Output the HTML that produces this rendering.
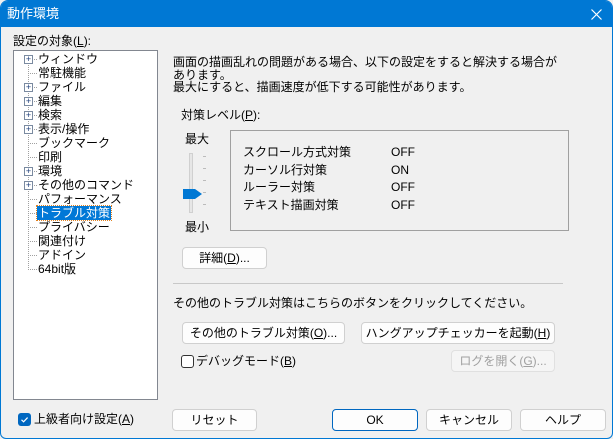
<!DOCTYPE html>
<html><head><meta charset="utf-8"><style>
*{margin:0;padding:0;box-sizing:border-box}
body{width:613px;height:439px;background:#f0f0f0;font-family:"Liberation Sans","Noto Sans CJK JP",sans-serif;font-size:12px;color:#000;position:relative;overflow:hidden}
.win{position:absolute;left:0;top:0;width:613px;height:439px;border:1px solid #0078d4;border-radius:8px 8px 6px 6px;overflow:hidden;background:#f0f0f0}
.title{position:absolute;left:0;top:0;width:613px;height:26px;background:#0078d4;color:#fff;font-size:13px;line-height:26px;padding-left:6px}
.a{position:absolute;white-space:nowrap;line-height:14px}
.tree{position:absolute;left:12px;top:49px;width:145px;height:350px;background:#fff;border:1px solid #828790}
.btn{position:absolute;background:#fdfdfd;border:1px solid #d0d0d0;border-radius:4px;text-align:center;line-height:20px;height:22px}
.plus{position:absolute;width:9px;height:9px;border:1px solid #7a8aa0;background:#fff;font-size:9px;line-height:7px;text-align:center;color:#1e3f7a}
u{text-decoration:underline}
</style></head><body><div class="win">
<div class="title">動作環境</div>
<svg style="position:absolute;left:590px;top:8px" width="11" height="11"><path d="M0.5 0.5L10.5 10.5M10.5 0.5L0.5 10.5" stroke="#fff" stroke-width="1.2"/></svg>
<div class="a" style="left:12px;top:33px">設定の対象(<u>L</u>):</div>
<div class="tree">
<svg style="position:absolute;left:0;top:0" width="40" height="230"><g stroke="#a0a0a0" stroke-dasharray="1 1"><line x1="14.5" y1="6" x2="14.5" y2="220"/>
<line x1="14" y1="8.5" x2="24" y2="8.5"/><line x1="14" y1="22.5" x2="24" y2="22.5"/><line x1="14" y1="36.5" x2="24" y2="36.5"/><line x1="14" y1="50.5" x2="24" y2="50.5"/><line x1="14" y1="64.5" x2="24" y2="64.5"/><line x1="14" y1="78.5" x2="24" y2="78.5"/><line x1="14" y1="92.5" x2="24" y2="92.5"/><line x1="14" y1="106.5" x2="24" y2="106.5"/><line x1="14" y1="120.5" x2="24" y2="120.5"/><line x1="14" y1="134.5" x2="24" y2="134.5"/><line x1="14" y1="148.5" x2="24" y2="148.5"/><line x1="14" y1="162.5" x2="24" y2="162.5"/><line x1="14" y1="176.5" x2="24" y2="176.5"/><line x1="14" y1="190.5" x2="24" y2="190.5"/><line x1="14" y1="204.5" x2="24" y2="204.5"/><line x1="14" y1="218.5" x2="24" y2="218.5"/></g></svg>
<div class="plus" style="left:10px;top:4px">+</div>
<div class="plus" style="left:10px;top:32px">+</div>
<div class="plus" style="left:10px;top:46px">+</div>
<div class="plus" style="left:10px;top:60px">+</div>
<div class="plus" style="left:10px;top:74px">+</div>
<div class="plus" style="left:10px;top:116px">+</div>
<div class="plus" style="left:10px;top:130px">+</div>
<div class="a" style="left:24px;top:1px">ウィンドウ</div>
<div class="a" style="left:24px;top:15px">常駐機能</div>
<div class="a" style="left:24px;top:29px">ファイル</div>
<div class="a" style="left:24px;top:43px">編集</div>
<div class="a" style="left:24px;top:57px">検索</div>
<div class="a" style="left:24px;top:71px">表示/操作</div>
<div class="a" style="left:24px;top:85px">ブックマーク</div>
<div class="a" style="left:24px;top:99px">印刷</div>
<div class="a" style="left:24px;top:113px">環境</div>
<div class="a" style="left:24px;top:127px">その他のコマンド</div>
<div class="a" style="left:24px;top:141px">パフォーマンス</div>
<div class="a" style="left:23px;top:155px;background:#0078d7;color:#fff;outline:1px dotted #e08020;padding:0 1px">トラブル対策</div>
<div class="a" style="left:24px;top:169px">プライバシー</div>
<div class="a" style="left:24px;top:183px">関連付け</div>
<div class="a" style="left:24px;top:197px">アドイン</div>
<div class="a" style="left:24px;top:211px">64bit版</div>
</div>
<div class="a" style="left:172px;top:55px;line-height:12.5px">画面の描画乱れの問題がある場合、以下の設定をすると解決する場合が<br>あります。<br>最大にすると、描画速度が低下する可能性があります。</div>
<div class="a" style="left:180px;top:107px">対策レベル(<u>P</u>):</div>
<div class="a" style="left:184px;top:131px">最大</div>
<div class="a" style="left:184px;top:219px">最小</div>
<div style="position:absolute;left:188px;top:152px;width:4px;height:60px;background:#e6e6e6;border:1px solid #d0d0d0"></div>
<div style="position:absolute;left:202px;top:155px;width:3px;height:1px;background:#bbb;box-shadow:0 12px #bbb,0 24px #bbb,0 36px #bbb,0 48px #bbb"></div>
<svg style="position:absolute;left:182px;top:187px" width="20" height="12"><path d="M0 1H12L19 6L12 11H0Z" fill="#0078d4"/></svg>
<div style="position:absolute;left:229px;top:129px;width:339px;height:101px;border:1px solid #a0a0a0"></div>
<div class="a" style="left:242px;top:143px;line-height:17.7px">スクロール方式対策<br>カーソル行対策<br>ルーラー対策<br>テキスト描画対策</div>
<div class="a" style="left:390px;top:143px;line-height:17.7px">OFF<br>ON<br>OFF<br>OFF</div>
<div class="btn" style="left:181px;top:246px;width:85px">詳細(<u>D</u>)...</div>
<div style="position:absolute;left:172px;top:282px;width:390px;height:1px;background:#c8c8c8"></div>
<div class="a" style="left:172px;top:295px">その他のトラブル対策はこちらのボタンをクリックしてください。</div>
<div class="btn" style="left:181px;top:321px;width:163px">その他のトラブル対策(<u>O</u>)...</div>
<div class="btn" style="left:360px;top:321px;width:194px">ハングアップチェッカーを起動(<u>H</u>)</div>
<div style="position:absolute;left:180px;top:354px;width:13px;height:13px;border:1px solid #333;border-radius:3px;background:#fff"></div>
<div class="a" style="left:195px;top:353px">デバッグモード(<u>B</u>)</div>
<div class="btn" style="left:450px;top:349px;width:104px;color:#a0a0a0;background:#f5f5f5;border-color:#e0e0e0">ログを開く(<u>G</u>)...</div>
<div style="position:absolute;left:17px;top:412px;width:13px;height:13px;border-radius:3px;background:#0067c0"></div>
<svg style="position:absolute;left:17px;top:412px" width="13" height="13"><path d="M3.5 6.8L5.6 8.8L9.6 4.6" stroke="#fff" stroke-width="1.2" fill="none"/></svg>
<div class="a" style="left:33px;top:411px">上級者向け設定(<u>A</u>)</div>
<div class="btn" style="left:171px;top:408px;width:85px">リセット</div>
<div class="btn" style="left:331px;top:408px;width:86px;border:1px solid #0067c0">OK</div>
<div class="btn" style="left:425px;top:408px;width:86px">キャンセル</div>
<div class="btn" style="left:519px;top:408px;width:86px">ヘルプ</div>
</div></body></html>
